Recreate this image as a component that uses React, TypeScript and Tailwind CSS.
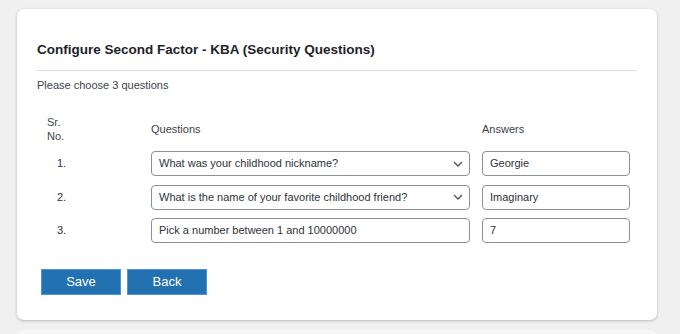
import React from "react";

const questions = [
  { no: "1.", q: "What was your childhood nickname?", a: "Georgie", select: true },
  { no: "2.", q: "What is the name of your favorite childhood friend?", a: "Imaginary", select: true },
  { no: "3.", q: "Pick a number between 1 and 10000000", a: "7", select: false },
];

function Chevron() {
  return (
    <svg width="10" height="6" viewBox="0 0 10 6" className="text-[#50575e]">
      <path d="M1 1l4 4 4-4" fill="none" stroke="currentColor" strokeWidth="1.4" />
    </svg>
  );
}

export default function App() {
  return (
    <div
      className="h-[334px] w-[680px] overflow-hidden bg-[#f0f0f1] pt-[9px] pl-[17px]"
      style={{ fontFamily: '"Liberation Sans", Arial, sans-serif' }}
    >
      <div className="w-[640px] h-[311px] rounded-[7px] bg-white shadow-[0_1px_3px_rgba(0,0,0,0.25)] px-5 pt-[32px]">
        <h2 className="text-[13.5px] font-bold leading-[18px] text-[#1d2327]">
          Configure Second Factor - KBA (Security Questions)
        </h2>
        <div className="mt-[11px] h-px bg-[#dcdcde]" />
        <p className="mt-[7px] text-[11px] leading-[14px] text-[#3c434a]">Please choose 3 questions</p>

        <div className="mt-[23px] grid grid-cols-[114px_331px_1fr] items-center text-[11px] text-[#3c434a]">
          <div className="pl-[10px] leading-[14px]">
            Sr.
            <br />
            No.
          </div>
          <div>Questions</div>
          <div>Answers</div>
        </div>

        <div className="mt-[8px] flex flex-col gap-[8.5px]">
          {questions.map((r) => (
            <div key={r.no} className="grid grid-cols-[114px_331px_1fr] items-center text-[11px] text-[#2c3338]">
              <div className="pl-[20px]">{r.no}</div>
              <div className="flex h-[25px] w-[319px] items-center justify-between rounded-[4px] border border-[#8c8f94] pl-[7px] pr-[6px]">
                <span>{r.q}</span>
                {r.select && <Chevron />}
              </div>
              <div className="flex h-[25px] w-[148px] items-center rounded-[4px] border border-[#8c8f94] px-[7px]">
                {r.a}
              </div>
            </div>
          ))}
        </div>

        <div className="mt-[26px] flex gap-[6px] pl-[4px]">
          <button className="h-[26px] w-[80px] bg-[#2271b1] border border-[#4f94d4] text-[13px] text-white">Save</button>
          <button className="h-[26px] w-[80px] bg-[#2271b1] border border-[#4f94d4] text-[13px] text-white">Back</button>
        </div>
      </div>
      <div className="mt-[10px] w-[640px] h-[10px] rounded-t-[7px] bg-[#f6f6f6]" />
    </div>
  );
}
